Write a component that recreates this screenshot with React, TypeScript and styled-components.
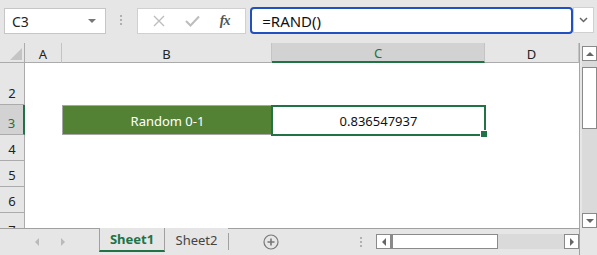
import { Fragment } from "react";
import styled, { createGlobalStyle } from "styled-components";

const GlobalStyle = createGlobalStyle`
  html, body {
    margin: 0;
    padding: 0;
    background: #e6e6e6;
  }
  * {
    box-sizing: border-box;
  }
`;

const UI_FONT = `"Noto Sans", "Open Sans", sans-serif`;

const Window = styled.div`
  width: 597px;
  height: 255px;
  background: #e6e6e6;
  display: flex;
  flex-direction: column;
  overflow: hidden;
  font-family: ${UI_FONT};
`;

/* ---------- formula bar ---------- */

const FormulaRow = styled.div`
  height: 43px;
  display: flex;
  align-items: flex-start;
  padding: 7px 3px 0 4px;
`;

const NameBox = styled.div`
  width: 102px;
  height: 26px;
  margin-top: 1px;
  background: #fff;
  border: 1px solid #c6c6c6;
  display: flex;
  align-items: center;
  justify-content: space-between;
  padding: 0 9px 0 7px;
  font-size: 14px;
  color: #222;
`;

const Caret = styled.span`
  width: 0;
  height: 0;
  border-left: 4px solid transparent;
  border-right: 4px solid transparent;
  border-top: 4px solid #777;
`;

const Grip = styled.div`
  width: 31px;
  height: 26px;
  display: flex;
  flex-direction: column;
  align-items: center;
  justify-content: center;
  gap: 2px;
  span {
    width: 2px;
    height: 2px;
    background: #b0b0b0;
  }
`;

const FxBox = styled.div`
  width: 110px;
  height: 26px;
  margin-top: 1px;
  background: #fff;
  border: 1px solid #d0d0d0;
  display: flex;
  align-items: center;
  justify-content: space-around;
  padding: 0 6px;
`;

const Fx = styled.span`
  font-family: "Liberation Serif", serif;
  font-style: italic;
  font-weight: 700;
  font-size: 14px;
  color: #555;
  letter-spacing: -1px;
`;

const FormulaInput = styled.div`
  width: 324px;
  height: 27px;
  margin-left: 4px;
  background: #fff;
  border: 2px solid #2150c0;
  border-radius: 4px;
  display: flex;
  align-items: center;
  padding-left: 10px;
  font-size: 15px;
  color: #111;
`;

const ExpandBox = styled.div`
  width: 21px;
  height: 26px;
  background: #fff;
  border: 1px solid #d0d0d0;
  display: flex;
  align-items: center;
  justify-content: center;
`;

/* ---------- sheet ---------- */

const Middle = styled.div`
  display: flex;
  height: 185px;
`;

const Sheet = styled.div`
  display: grid;
  grid-template-columns: 25px 37px 210px 213px 94px;
  grid-template-rows: 20px 42px 30px 26px 26px 26px 15px;
  width: 580px;
  border-right: 1px solid #a6a6a6;
  background: #fff;
`;

const Corner = styled.div`
  background: #e6e6e6;
  border-right: 1px solid #ababab;
  border-bottom: 1px solid #ababab;
  position: relative;
  &::after {
    content: "";
    position: absolute;
    right: 2px;
    bottom: 2px;
    border-left: 12px solid transparent;
    border-bottom: 12px solid #c4c4c4;
  }
`;

const ColHead = styled.div<{ $active?: boolean }>`
  background: ${(p) => (p.$active ? "#d2d2d2" : "#e6e6e6")};
  border-right: 1px solid #c4c4c4;
  border-bottom: ${(p) => (p.$active ? "2px solid #217346" : "1px solid #ababab")};
  display: flex;
  align-items: center;
  justify-content: center;
  font-size: 13px;
  color: ${(p) => (p.$active ? "#217346" : "#222")};
  padding-top: 2px;
`;

const RowHead = styled.div<{ $active?: boolean; $cut?: boolean }>`
  background: ${(p) => (p.$active ? "#d2d2d2" : "#e6e6e6")};
  border-right: ${(p) => (p.$active ? "2px solid #217346" : "1px solid #ababab")};
  border-bottom: ${(p) => (p.$cut ? "none" : "1px solid #ababab")};
  display: flex;
  align-items: ${(p) => (p.$cut ? "flex-start" : "flex-end")};
  justify-content: center;
  padding-bottom: 2px;
  padding-top: ${(p) => (p.$cut ? "8px" : "0")};
  font-size: 13px;
  line-height: 18px;
  color: ${(p) => (p.$active ? "#217346" : "#222")};
  overflow: hidden;
`;

const Cell = styled.div`
  background: #fff;
`;

const LabelCell = styled.div`
  background: #548235;
  border: 1px solid #a6a6a6;
  border-right: none;
  color: #fff;
  font-size: 13px;
  display: flex;
  align-items: center;
  justify-content: center;
  padding-top: 1px;
`;

const SelectedCell = styled.div`
  position: relative;
  display: flex;
  align-items: center;
  justify-content: center;
  font-size: 13px;
  color: #111;
  padding-top: 1px;
  &::before {
    content: "";
    position: absolute;
    inset: 0 -1px -1px -1px;
    border: 2px solid #217346;
  }
  &::after {
    content: "";
    position: absolute;
    right: -3px;
    bottom: -3px;
    width: 6px;
    height: 6px;
    background: #217346;
    border: 1px solid #fff;
  }
`;

/* ---------- scrollbars ---------- */

const VScroll = styled.div`
  width: 17px;
  display: flex;
  flex-direction: column;
  padding: 3px 0 0 2px;
`;

const ScrollBtn = styled.div`
  width: 15px;
  height: 15px;
  background: #fff;
  border: 1px solid #8a8a8a;
  display: flex;
  align-items: center;
  justify-content: center;
  flex-shrink: 0;
`;

const VTrack = styled.div`
  flex: 1;
  background: #dadada;
  display: flex;
  flex-direction: column;
  padding-top: 6px;
`;

const VThumb = styled.div`
  height: 62px;
  width: 15px;
  background: #fff;
  border: 1px solid #8a8a8a;
`;

const Tri = styled.span<{ $dir: "up" | "down" | "left" | "right" }>`
  width: 0;
  height: 0;
  ${(p) =>
    p.$dir === "up"
      ? "border-left:4px solid transparent;border-right:4px solid transparent;border-bottom:4px solid #666;"
      : p.$dir === "down"
      ? "border-left:4px solid transparent;border-right:4px solid transparent;border-top:4px solid #666;"
      : p.$dir === "left"
      ? "border-top:4px solid transparent;border-bottom:4px solid transparent;border-right:4px solid #666;"
      : "border-top:4px solid transparent;border-bottom:4px solid transparent;border-left:4px solid #666;"}
`;

/* ---------- bottom bar ---------- */

const BottomBar = styled.div`
  height: 27px;
  display: flex;
  align-items: stretch;
`;

const TabArea = styled.div`
  width: 580px;
  border-top: 1px solid #a0a0a0;
  border-right: 1px solid #a0a0a0;
  display: flex;
  align-items: stretch;
`;

const NavArrows = styled.div`
  width: 99px;
  display: flex;
  align-items: center;
  justify-content: center;
  gap: 22px;
`;

const FadedTri = styled(Tri)`
  opacity: 0.35;
`;

const Tab = styled.div<{ $active?: boolean }>`
  width: ${(p) => (p.$active ? "66px" : "63px")};
  display: flex;
  align-items: center;
  justify-content: center;
  font-size: 13px;
  font-weight: ${(p) => (p.$active ? 700 : 400)};
  color: ${(p) => (p.$active ? "#217346" : "#444")};
  border-left: ${(p) => (p.$active ? "1px solid #a0a0a0" : "none")};
  border-right: ${(p) => (p.$active ? "1px solid #a0a0a0" : "none")};
  border-bottom: ${(p) => (p.$active ? "2px solid #217346" : "none")};
  margin-top: -1px;
  margin-bottom: 3px;
  background: #e6e6e6;
`;

const TabSep = styled.div`
  width: 1px;
  margin: 4px 0 5px;
  background: #a0a0a0;
`;

const AddSheet = styled.div`
  width: 84px;
  display: flex;
  align-items: center;
  justify-content: center;
`;

const Spacer = styled.div`
  flex: 1;
`;

const HDots = styled.div`
  display: flex;
  flex-direction: column;
  justify-content: center;
  gap: 2px;
  margin-right: 14px;
  span {
    width: 2px;
    height: 2px;
    background: #b0b0b0;
  }
`;

const HScroll = styled.div`
  display: flex;
  align-items: center;
  height: 100%;
  padding-bottom: 1px;
`;

const HThumb = styled.div`
  width: 107px;
  height: 15px;
  background: #fff;
  border: 1px solid #8a8a8a;
  border-left-width: 2px;
`;

const HTrack = styled.div`
  width: 66px;
  height: 15px;
  background: #dadada;
`;

const columns = ["A", "B", "C", "D"];

export default function App() {
  return (
    <>
      <GlobalStyle />
      <Window>
        <FormulaRow>
          <NameBox>
            <span>C3</span>
            <Caret />
          </NameBox>
          <Grip>
            <span />
            <span />
            <span />
          </Grip>
          <FxBox>
            <svg width="12" height="12" viewBox="0 0 12 12">
              <path d="M1 1 L11 11 M11 1 L1 11" stroke="#bdbdbd" strokeWidth="1.4" />
            </svg>
            <svg width="15" height="12" viewBox="0 0 15 12">
              <path d="M1 6 L5.5 10.5 L14 1.5" stroke="#bdbdbd" strokeWidth="2" fill="none" />
            </svg>
            <Fx>fx</Fx>
          </FxBox>
          <FormulaInput>=RAND()</FormulaInput>
          <ExpandBox>
            <svg width="9" height="6" viewBox="0 0 9 6">
              <path d="M1 1 L4.5 4.5 L8 1" stroke="#666" strokeWidth="1.5" fill="none" />
            </svg>
          </ExpandBox>
        </FormulaRow>

        <Middle>
          <Sheet>
            <Corner />
            {columns.map((c) => (
              <ColHead key={c} $active={c === "C"}>
                {c}
              </ColHead>
            ))}

            <RowHead>2</RowHead>
            <Cell />
            <Cell />
            <Cell />
            <Cell />

            <RowHead $active>3</RowHead>
            <Cell />
            <LabelCell>Random 0-1</LabelCell>
            <SelectedCell>0.836547937</SelectedCell>
            <Cell />

            {[4, 5, 6, 7].map((r) => (
              <Fragment key={r}>
                <RowHead $cut={r === 7}>{r}</RowHead>
                <Cell />
                <Cell />
                <Cell />
                <Cell />
              </Fragment>
            ))}
          </Sheet>
          <VScroll>
            <ScrollBtn>
              <Tri $dir="up" />
            </ScrollBtn>
            <VTrack>
              <VThumb />
            </VTrack>
            <ScrollBtn>
              <Tri $dir="down" />
            </ScrollBtn>
          </VScroll>
        </Middle>

        <BottomBar>
          <TabArea>
            <NavArrows>
              <FadedTri $dir="left" />
              <FadedTri $dir="right" />
            </NavArrows>
            <Tab $active>Sheet1</Tab>
            <Tab>Sheet2</Tab>
            <TabSep />
            <AddSheet>
              <svg width="16" height="16" viewBox="0 0 16 16">
                <circle cx="8" cy="8" r="7" stroke="#777" strokeWidth="1.2" fill="none" />
                <path d="M8 4.5 V11.5 M4.5 8 H11.5" stroke="#777" strokeWidth="1.6" />
              </svg>
            </AddSheet>
            <Spacer />
            <HDots>
              <span />
              <span />
              <span />
            </HDots>
            <HScroll>
              <ScrollBtn>
                <Tri $dir="left" />
              </ScrollBtn>
              <HThumb />
              <HTrack />
              <ScrollBtn>
                <Tri $dir="right" />
              </ScrollBtn>
            </HScroll>
          </TabArea>
        </BottomBar>
      </Window>
    </>
  );
}
